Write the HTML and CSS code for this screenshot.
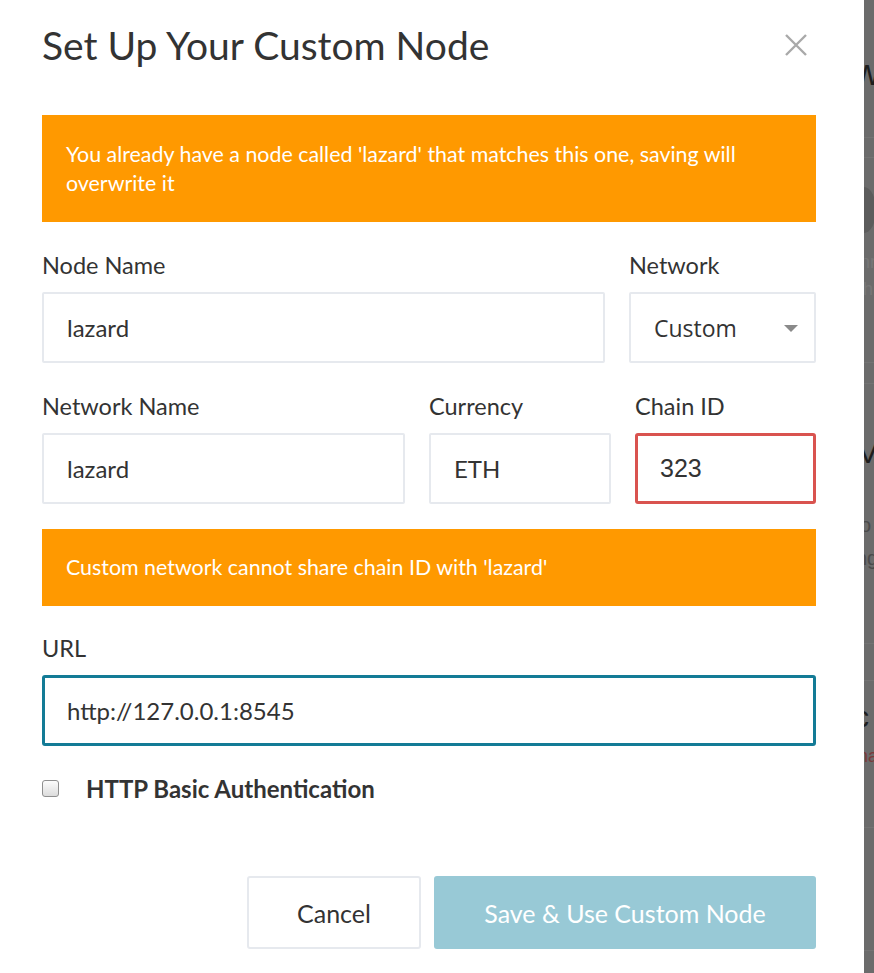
FILE: index.html
```html
<!DOCTYPE html>
<html>
<head>
<meta charset="utf-8">
<link rel="stylesheet" href="styles.css">
</head>
<body>
<div class="page">
  <div class="modal">
    <div class="header">
      <h1 class="title">Set Up Your Custom Node</h1>
      <button class="close" aria-label="Close">
        <svg width="24" height="24" viewBox="0 0 24 24"><path d="M2 2 L22 22 M22 2 L2 22" stroke="#a9a9a9" stroke-width="2.4" fill="none"/></svg>
      </button>
    </div>
    <div class="alert alert-top">You already have a node called 'lazard' that matches this one, saving will overwrite it</div>

    <div class="row row-1">
      <div class="field">
        <label class="label">Node Name</label>
        <div class="input">lazard</div>
      </div>
      <div class="field">
        <label class="label">Network</label>
        <div class="input select"><span class="sel-text">Custom</span><span class="caret"></span></div>
      </div>
    </div>

    <div class="row row-2">
      <div class="field">
        <label class="label">Network Name</label>
        <div class="input">lazard</div>
      </div>
      <div class="field">
        <label class="label">Currency</label>
        <div class="input">ETH</div>
      </div>
      <div class="field field-chain">
        <label class="label">Chain ID</label>
        <div class="input input-error">323</div>
      </div>
    </div>

    <div class="alert alert-mid">Custom network cannot share chain ID with 'lazard'</div>

    <div class="field field-url">
      <label class="label">URL</label>
      <div class="input input-focus">http://127.0.0.1:8545</div>
    </div>

    <div class="check-row">
      <span class="checkbox"></span>
      <span class="check-label">HTTP Basic Authentication</span>
    </div>

    <div class="footer">
      <button class="btn btn-cancel">Cancel</button>
      <button class="btn btn-save">Save &amp; Use Custom Node</button>
    </div>
  </div>
  <div class="backdrop">
    <span class="bg-w">w</span>
    <span class="bg-line l1"></span>
    <span class="bg-line l1b"></span>
    <span class="bg-blob"></span>
    <span class="bg-faint f1">nr</span>
    <span class="bg-faint f2">h</span>
    <span class="bg-line l2"></span>
    <span class="bg-line l2b"></span>
    <span class="bg-vi">Vi</span>
    <span class="bg-txt t1">o</span>
    <span class="bg-txt t2">ng</span>
    <span class="bg-line l3"></span>
    <span class="bg-line l3b"></span>
    <span class="bg-c">c</span>
    <span class="bg-red">na</span>
    <span class="bg-line l4"></span>
    <span class="bg-line l5"></span>
  </div>
</div>
</body>
</html>
```
FILE: styles.css
```css
* { box-sizing: border-box; }
html, body {
  margin: 0;
  padding: 0;
  background: #fff;
}
body {
  font-family: Lato, "Liberation Sans", sans-serif;
  color: #333;
}
.page {
  display: flex;
  width: 874px;
  height: 973px;
  overflow: hidden;
}
.modal {
  width: 864px;
  flex: none;
  background: #fff;
  padding: 0 48px 0 42px;
}
.header {
  display: flex;
  justify-content: space-between;
  align-items: center;
  height: 90px;
}
.title {
  margin: 0;
  font-weight: 400;
  font-size: 39px;
  color: #333;
}
.close {
  border: 0;
  background: none;
  padding: 0;
  margin-right: 8px;
  width: 24px;
  height: 24px;
  display: flex;
}
.alert {
  background: #ff9900;
  color: #fff;
  font-size: 21.4px;
  line-height: 29px;
  padding: 0 24px;
  display: flex;
  align-items: center;
}
.alert-top {
  margin-top: 25px;
  height: 107px;
  padding-right: 60px;
}
.alert-mid {
  height: 77px;
  margin-top: 25px;
}
.row {
  display: flex;
  gap: 24px;
}
.row-1 { margin-top: 28px; }
.row-1 .field:first-child { width: 563px; }
.row-1 .field:last-child { width: 187px; }
.row-2 { margin-top: 28px; }
.row-2 .field:nth-child(1) { width: 363px; }
.row-2 .field:nth-child(2) { width: 182px; }
.row-2 .field:nth-child(3) { width: 181px; }
.field { display: flex; flex-direction: column; }
.label {
  font-size: 23.5px;
  line-height: 30px;
  height: 30px;
  margin-bottom: 12px;
  color: #333;
  display: block;
}
.input {
  height: 71px;
  border: 2px solid #e6e9ee;
  border-radius: 2px;
  font-size: 24px;
  display: flex;
  align-items: center;
  padding: 0 23px;
  color: #333;
  background: #fff;
}
.select {
  justify-content: space-between;
  padding-right: 16px;
}
.sel-text {
  font-family: "Open Sans", "Noto Sans", sans-serif;
  font-size: 23px;
}
.caret {
  width: 0;
  height: 0;
  border-left: 7px solid transparent;
  border-right: 7px solid transparent;
  border-top: 7px solid #8a8a8a;
  margin-top: 2px;
}
.input-error {
  border: 3px solid #d9534f;
  border-radius: 3px;
  font-family: "Liberation Sans", Arial, sans-serif;
  font-size: 25px;
  padding-left: 22px;
}
.field-url { margin-top: 27px; }
.input-focus {
  border: 3px solid #137b96;
  border-radius: 3px;
  padding-left: 22px;
}
.check-row {
  display: flex;
  align-items: center;
  margin-top: 27px;
  height: 30px;
}
.checkbox {
  width: 17px;
  height: 17px;
  border: 1px solid #8f8f8f;
  border-radius: 3px;
  background: linear-gradient(#fcfcfc, #dcdcdc);
  margin-right: 27px;
}
.check-label {
  font-weight: 700;
  font-size: 24px;
  color: #333;
}
.footer {
  display: flex;
  justify-content: flex-end;
  gap: 13px;
  margin-top: 73px;
}
.btn {
  height: 73px;
  font-family: Lato, "Liberation Sans", sans-serif;
  font-size: 25px;
  border-radius: 3px;
  cursor: pointer;
}
.btn-cancel {
  width: 174px;
  background: #fff;
  border: 2px solid #e6e9ee;
  color: #333;
}
.btn-save {
  width: 382px;
  background: #98c9d6;
  border: 0;
  color: #fff;
}
.backdrop {
  flex: 1;
  background: #6b6b6b;
  position: relative;
  overflow: hidden;
  font-family: "Liberation Sans", Arial, sans-serif;
}
.backdrop span { position: absolute; }
.bg-w { left: -10px; top: 52px; font-size: 36px; color: #1e1e1e; }
.bg-line { left: 0; right: 0; height: 1px; background: #737373; }
.l1 { top: 137px; }
.l1b { top: 157px; }
.l2 { top: 362px; }
.l2b { top: 383px; }
.l3 { top: 643px; }
.l3b { top: 680px; }
.l4 { top: 827px; }
.l5 { top: 950px; }
.bg-blob { left: -12px; top: 187px; width: 24px; height: 46px; border-radius: 50%; background: #5c5c5c; }
.bg-faint { left: -4px; font-size: 18px; color: #777; }
.f1 { top: 252px; }
.f2 { top: 279px; left: -1px; }
.bg-vi { left: -6px; top: 436px; font-size: 30px; color: #1e1e1e; }
.bg-txt { font-size: 20px; color: #4a4a4a; }
.t1 { top: 514px; left: -4px; }
.t2 { top: 547px; left: -8px; }
.bg-c { left: -10px; top: 700px; font-size: 30px; color: #1e1e1e; }
.bg-red { left: -6px; top: 746px; font-size: 18px; color: #7a3a3a; }
```
